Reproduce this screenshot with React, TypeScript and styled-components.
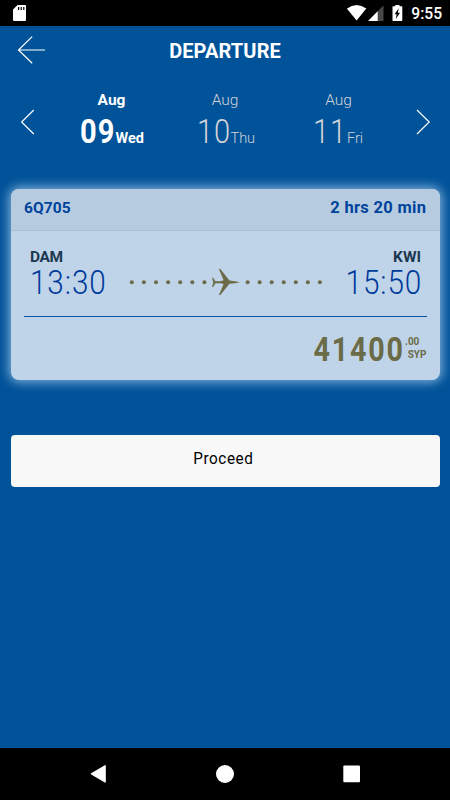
import React from 'react';
import styled, { createGlobalStyle } from 'styled-components';

const GlobalStyle = createGlobalStyle`
  * { box-sizing: border-box; }
  body { margin: 0; background: #005299; }
`;

const Screen = styled.div`
  width: 450px;
  height: 800px;
  display: flex;
  flex-direction: column;
  overflow: hidden;
  background: #005299;
  color: #fff;
  font-family: Roboto, 'Liberation Sans', sans-serif;
`;

/* A single line of type; line box is fixed so that sizes don't shift rows. */
const Label = styled.span<{
  $size: number;
  $line: number;
  $weight?: number;
  $track?: number;
  $color?: string;
}>`
  display: block;
  white-space: pre;
  font-size: ${(p) => p.$size}px;
  line-height: ${(p) => p.$line}px;
  font-weight: ${(p) => p.$weight ?? 400};
  letter-spacing: ${(p) => p.$track ?? 0}px;
  margin-right: ${(p) => -(p.$track ?? 0)}px;
  color: ${(p) => p.$color ?? 'inherit'};
`;

/* Narrowed figures with open spacing. */
const Condensed = styled(Label)<{ $scale: number; $origin?: string }>`
  transform: scaleX(${(p) => p.$scale});
  transform-origin: ${(p) => p.$origin ?? 'left'} center;
`;

const StatusBar = styled.div`
  flex: none;
  height: 26px;
  padding: 0 8px 0 13px;
  display: flex;
  justify-content: space-between;
  background: #000;
`;

const StatusIcons = styled.div`
  display: flex;
`;

const Header = styled.header`
  flex: none;
  height: 50px;
  display: grid;
  grid-template-columns: 62px 1fr 62px;
  justify-items: center;
  align-items: center;
`;

const IconButton = styled.button`
  display: flex;
  padding: 0;
  border: 0;
  background: none;
  color: inherit;
`;

const BackButton = styled(IconButton)`
  margin-top: -2px;
`;

const DateStrip = styled.nav`
  flex: none;
  height: 113px;
  padding: 14px 18px 0;
  display: grid;
  grid-template-columns: 37px 113px 114px 113px 37px;
`;

const DateItem = styled.div<{ $active?: boolean }>`
  display: flex;
  flex-direction: column;
  align-items: center;
  color: ${(p) => (p.$active ? '#fff' : '#d2d3d8')};
`;

const DayLine = styled.div`
  width: 64px;
  display: flex;
  align-items: baseline;
  margin-top: 2px;
`;

const DayNumber = styled.div<{ $width: number; $inset?: number }>`
  width: ${(p) => p.$width}px;
  padding-left: ${(p) => p.$inset ?? 0}px;
`;

const ArrowCell = styled(IconButton)<{ $end?: boolean }>`
  padding-top: 19px;
  justify-content: ${(p) => (p.$end ? 'flex-end' : 'flex-start')};
`;

const Card = styled.section`
  flex: none;
  margin: 0 10px 0 11px;
  height: 190.5px;
  border-radius: 8px;
  background: #bfd4e8;
  box-shadow: 0 0 11px 2px rgba(158, 199, 232, 0.85);
`;

const CardHeader = styled.div`
  height: 42px;
  padding: 0 14px 3px 13px;
  display: flex;
  justify-content: space-between;
  align-items: center;
  border-radius: 8px 8px 0 0;
  border-bottom: 1px solid #a9bfd5;
  background: #b6cbdf;
`;

const Route = styled.div`
  height: 86px;
  margin: 0 13px;
  padding: 16px 6px 0;
  display: grid;
  grid-template-columns: 98px 1fr 98px;
  border-bottom: 1px solid #0052a5;
`;

const Stop = styled.div<{ $end?: boolean }>`
  display: flex;
  flex-direction: column;
  align-items: ${(p) => (p.$end ? 'flex-end' : 'flex-start')};
`;

const Flight = styled.svg`
  display: block;
  justify-self: center;
  margin-top: 21px;
`;

const PriceRow = styled.div`
  display: flex;
  justify-content: flex-end;
  padding: 13px 13px 0;
`;

const PriceSuffix = styled.div`
  width: 22px;
  margin-left: 2px;
  display: flex;
  flex-direction: column;
  margin-top: 5px;
`;

const SuffixLine = styled(Condensed)<{ $inset?: number }>`
  padding-left: ${(p) => p.$inset ?? 0}px;
`;

const Proceed = styled.button`
  flex: none;
  height: 52px;
  margin: 55.5px 10px 0 11px;
  padding: 0 5px 6px 0;
  display: flex;
  justify-content: center;
  align-items: center;
  border: 0;
  border-radius: 4px;
  background: #f8f8f8;
  color: #000;
  font-family: inherit;
`;

const NavBar = styled.div`
  flex: none;
  height: 52px;
  margin-top: auto;
  display: flex;
  justify-content: center;
  background: #000;
`;

const dots = [0, 1, 2, 3, 4, 5, 6];

const OLIVE = '#6b6b47';
const BLUE = '#00439c';
const NAVY = '#1c3850';

interface Day {
  month: string;
  date: string;
  weekday: string;
  width: number;
  inset: number;
  active?: boolean;
}

const days: Day[] = [
  { month: 'Aug', date: '09', weekday: 'Wed', width: 36, inset: -1, active: true },
  { month: 'Aug', date: '10', weekday: 'Thu', width: 37.5, inset: 3.5 },
  { month: 'Aug', date: '11', weekday: 'Fri', width: 40.5, inset: 6.5 },
];

export default function App() {
  return (
    <>
      <GlobalStyle />
      <Screen>
        <StatusBar>
          <svg width="14" height="26" viewBox="0 0 14 26">
            <path d="M4.6 5H12q1 0 1 1v14q0 1-1 1H1q-1 0-1-1V9.6z" fill="#fff" />
            <path d="M5.6 7v3M8.2 7v3M10.8 7v3" stroke="#000" strokeWidth="1.2" />
          </svg>
          <StatusIcons>
            <svg width="64" height="26" viewBox="347.5 0 64 26">
              <path d="M347.4 8.6Q357 1.4 366.8 8.6L357.1 20.6z" fill="#fff" />
              <path d="M384 5.4V21H368.6z" fill="#484848" />
              <path d="M378.2 11.2V21H368.6z" fill="#fff" />
              <path d="M393.8 6.2h2V5h4.2v1.2h2q.8 0 .8.8v13.2q0 .8-.8.8h-8.2q-.8 0-.8-.8V7q0-.8.8-.8z" fill="#fff" />
              <path d="M399.3 8.2l-4.2 6h2.1l-.9 4.9 4.2-6.3h-2.2z" fill="#000" />
            </svg>
            <Label $size={15.6} $line={28} $weight={500}>9:55</Label>
          </StatusIcons>
        </StatusBar>

        <Header>
          <BackButton aria-label="Back">
            <svg width="28" height="28" viewBox="0 0 28 28" fill="none" stroke="#fff" strokeWidth="1.2">
              <path d="M15.2 .6L1.5 14l13.7 13.2M1.5 14H28" />
            </svg>
          </BackButton>
          <Label $size={20} $line={48} $weight={700} $track={0.1}>DEPARTURE</Label>
        </Header>

        <DateStrip>
          <ArrowCell aria-label="Previous">
            <svg width="17" height="26" viewBox="0 0 17 26" fill="none" stroke="#fff" strokeWidth="1.2">
              <path d="M15.8 1L3.6 13l12.2 12" />
            </svg>
          </ArrowCell>
          {days.map((d) => (
            <DateItem key={d.date} $active={d.active}>
              <Label $size={15.5} $line={20} $weight={d.active ? 700 : 300}>{d.month}</Label>
              <DayLine>
                <DayNumber $width={d.width} $inset={d.inset}>
                  <Condensed $size={33} $line={39} $weight={d.active ? 700 : 300} $track={d.active ? 1.2 : 1} $scale={0.88}>
                    {d.date}
                  </Condensed>
                </DayNumber>
                <Label $size={14.5} $line={20} $weight={d.active ? 700 : 300}>{d.weekday}</Label>
              </DayLine>
            </DateItem>
          ))}
          <ArrowCell $end aria-label="Next">
            <svg width="17" height="26" viewBox="0 0 17 26" fill="none" stroke="#fff" strokeWidth="1.2">
              <path d="M2 1l12.2 12L2 25" />
            </svg>
          </ArrowCell>
        </DateStrip>

        <Card>
          <CardHeader>
            <Label $size={15.5} $line={20} $weight={700} $track={0.1} $color={BLUE}>6Q705</Label>
            <Label $size={16.5} $line={20} $weight={700} $track={0.3} $color={BLUE}>2 hrs 20 min</Label>
          </CardHeader>
          <Route>
            <Stop>
              <Label $size={15.5} $line={20} $weight={700} $track={-0.4} $color={NAVY}>DAM</Label>
              <Condensed $size={33} $line={32} $weight={300} $track={1} $scale={0.9} $color="#003b9c">13:30</Condensed>
            </Stop>
            <Flight width="194" height="28" viewBox="129 268 194 28" fill={OLIVE}>
              {dots.map((i) => (
                <circle key={i} cx={131.8 + i * 12.1} cy="282.2" r="2" />
              ))}
              {dots.map((i) => (
                <circle key={i + 7} cx={247.6 + i * 12.05} cy="282.2" r="2" />
              ))}
              <path d="M212 277.4l1.3.5 2.1 3.3h5.1q1.7-.2 3.1-.9l-4.8-11.6 1.8.5 8.8 11.3q6.4.6 10.4 1.7-4 1.2-10.4 1.6l-8.8 10.9-1.8.5 4.8-11q-1.4-.8-3.1-1h-5.1l-2.1 3.6-1.3.4 1.3-4.9z" />
            </Flight>
            <Stop $end>
              <Label $size={15.5} $line={20} $weight={700} $color={NAVY}>KWI</Label>
              <Condensed $size={33} $line={32} $weight={300} $track={1} $scale={0.9} $origin="right" $color="#003b9c">15:50</Condensed>
            </Stop>
          </Route>
          <PriceRow>
            <Condensed $size={33} $line={40} $weight={700} $track={2} $scale={0.87} $origin="right" $color={OLIVE}>41400</Condensed>
            <PriceSuffix>
              <SuffixLine $size={10.5} $line={13} $weight={700} $scale={0.95} $color={OLIVE}>.00</SuffixLine>
              <SuffixLine $size={11} $line={13} $weight={700} $scale={0.9} $inset={3} $color={OLIVE}>SYP</SuffixLine>
            </PriceSuffix>
          </PriceRow>
        </Card>

        <Proceed>
          <Condensed $size={17} $line={24} $weight={400} $track={0.6} $scale={0.9} $origin="center">Proceed</Condensed>
        </Proceed>

        <NavBar>
          <svg width="270" height="52" viewBox="90 748 270 52" fill="#fff">
            <path d="M105.8 765.7v16.2q0 1-1 .5l-13.6-8q-.9-.6 0-1.2l13.6-8q1-.5 1 .5z" />
            <circle cx="225" cy="774" r="9" />
            <rect x="343.3" y="765.5" width="16.7" height="16.7" rx="1" />
          </svg>
        </NavBar>
      </Screen>
    </>
  );
}
